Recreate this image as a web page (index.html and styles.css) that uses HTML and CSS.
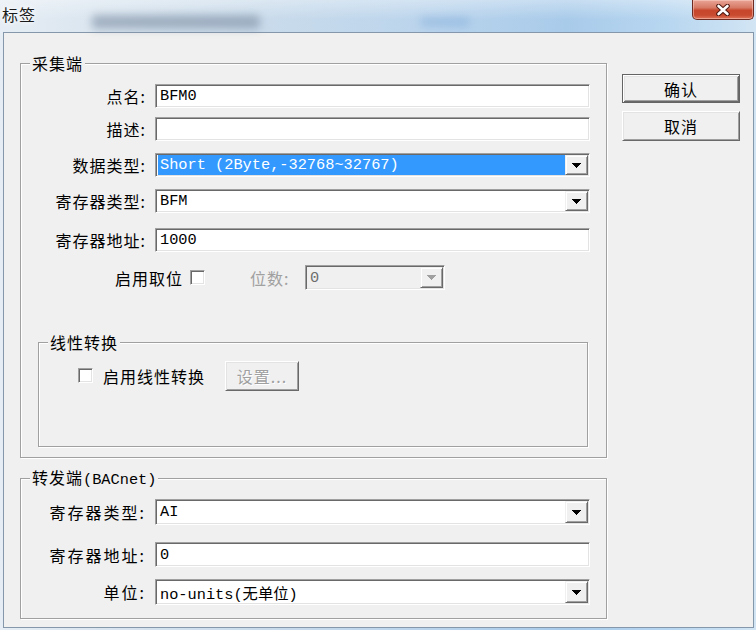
FILE: index.html
```html
<!DOCTYPE html>
<html lang="zh-CN">
<head>
<meta charset="utf-8">
<title>标签</title>
<link rel="stylesheet" href="styles.css">
</head>
<body>
<div class="window">
  <header class="titlebar">
    <span class="title">标签</span>
    <span class="glass-shape glass-shape-a"></span>
    <span class="glass-shape glass-shape-b"></span>
    <button class="close-btn" aria-label="关闭">
      <svg width="16" height="12" viewBox="0 0 16 12"><path d="M3.5 2 L12.5 10 M12.5 2 L3.5 10" stroke="#4e1810" stroke-width="4.6" stroke-linecap="round"/><path d="M3.5 2 L12.5 10 M12.5 2 L3.5 10" stroke="#ffffff" stroke-width="2.6" stroke-linecap="round"/></svg>
    </button>
  </header>
  <div class="client">
    <div class="main-col">
      <fieldset class="group group-collect">
        <legend>采集端</legend>
        <div class="row row-name"><span class="lbl">点名:</span><div class="edit"><span class="val">BFM0</span></div></div>
        <div class="row row-desc"><span class="lbl">描述:</span><div class="edit"><span class="val"></span></div></div>
        <div class="row row-dtype"><span class="lbl">数据类型:</span><div class="combo"><span class="val selected">Short (2Byte,-32768~32767)</span><span class="drop"><svg width="9" height="5" viewBox="0 0 9 5"><path d="M0 0h9v1h-1v1h-1v1h-1v1h-1v1h-1v-1h-1v-1h-1v-1h-1v-1h-1z" fill="#000"/></svg></span></div></div>
        <div class="row row-rtype"><span class="lbl">寄存器类型:</span><div class="combo"><span class="val">BFM</span><span class="drop"><svg width="9" height="5" viewBox="0 0 9 5"><path d="M0 0h9v1h-1v1h-1v1h-1v1h-1v1h-1v-1h-1v-1h-1v-1h-1v-1h-1z" fill="#000"/></svg></span></div></div>
        <div class="row row-raddr"><span class="lbl">寄存器地址:</span><div class="edit"><span class="val">1000</span></div></div>
        <div class="row row-bits">
          <span class="bits-label">启用取位</span>
          <span class="check check-bits"></span>
          <span class="bits-count">位数:</span>
          <div class="combo combo-disabled"><span class="val">0</span><span class="drop"><svg width="9" height="5" viewBox="0 0 9 5"><path d="M0 0h9v1h-1v1h-1v1h-1v1h-1v1h-1v-1h-1v-1h-1v-1h-1v-1h-1z" fill="#a0a0a0"/></svg></span></div>
        </div>
        <fieldset class="group group-linear">
          <legend>线性转换</legend>
          <div class="row row-linear">
            <span class="check check-linear"></span>
            <span class="linear-label">启用线性转换</span>
            <button class="btn btn-setup" disabled>设置...</button>
          </div>
        </fieldset>
      </fieldset>
      <fieldset class="group group-forward">
        <legend>转发端<span class="mono">(BACnet)</span></legend>
        <div class="row row-f1"><span class="lbl lbl-wide">寄存器类型:</span><div class="combo"><span class="val">AI</span><span class="drop"><svg width="9" height="5" viewBox="0 0 9 5"><path d="M0 0h9v1h-1v1h-1v1h-1v1h-1v1h-1v-1h-1v-1h-1v-1h-1v-1h-1z" fill="#000"/></svg></span></div></div>
        <div class="row row-f2"><span class="lbl lbl-wide">寄存器地址:</span><div class="edit"><span class="val">0</span></div></div>
        <div class="row row-f3"><span class="lbl lbl-wide">单位:</span><div class="combo"><span class="val">no-units(无单位)</span><span class="drop"><svg width="9" height="5" viewBox="0 0 9 5"><path d="M0 0h9v1h-1v1h-1v1h-1v1h-1v1h-1v-1h-1v-1h-1v-1h-1v-1h-1z" fill="#000"/></svg></span></div></div>
      </fieldset>
    </div>
    <div class="btn-col">
      <button class="btn btn-default">确认</button>
      <button class="btn btn-cancel">取消</button>
    </div>
  </div>
</div>
</body>
</html>
```

FILE: styles.css
```css
* { box-sizing: border-box; }
html, body { margin: 0; padding: 0; }
body {
  width: 756px;
  height: 630px;
  overflow: hidden;
  font-family: "Noto Sans CJK SC", "Noto Sans", sans-serif;
  font-size: 16px;
  color: #000;
  background: #b9d3ea;
}
.window {
  width: 756px;
  height: 630px;
  display: flex;
  flex-direction: column;
  background: linear-gradient(90deg, #e6edf4 0%, #dbe6f0 12%, #c9dbeb 35%, #bcd5ec 55%, #a9cbea 75%, #b7d6f0 88%, #d2e5f4 100%);
}
.titlebar {
  position: relative;
  height: 32px;
  flex: none;
  display: flex;
  align-items: flex-start;
  background: linear-gradient(180deg, rgba(255,255,255,.35), rgba(255,255,255,0) 60%);
}
.title {
  position: relative;
  z-index: 1;
  margin: 3px 0 0 2px;
  line-height: 22px;
  font-size: 16px;
  letter-spacing: 1px;
  color: #1b1b1b;
  text-shadow: 0 0 8px #fff, 0 0 4px #fff;
}
.glass-shape { position: absolute; border-radius: 4px; filter: blur(4px); }
.glass-shape-a { left: 92px; top: 15px; width: 168px; height: 14px; background: #7d8ea3; opacity: .6; }
.glass-shape-b { left: 420px; top: 17px; width: 50px; height: 10px; background: #6f9fd6; opacity: .35; }
.close-btn {
  position: relative;
  z-index: 1;
  margin: 0 2px 0 auto;
  width: 62px;
  height: 20px;
  padding: 0;
  border: 1px solid #6d2b22;
  border-top: 0;
  border-radius: 0 0 5px 5px;
  background: linear-gradient(180deg, #e9a597 0%, #d77a66 40%, #c7462c 55%, #c84a2f 80%, #e0765c 100%);
  box-shadow: inset 0 0 0 1px rgba(255,220,210,.45);
  display: flex;
  align-items: center;
  justify-content: center;
}
.client {
  flex: 1;
  margin: 0 2px 2px 3px;
  border: 1px solid #8597ab;
  background: #f0f0f0;
  display: flex;
  align-items: flex-start;
}
.main-col {
  padding-left: 16px;
  display: flex;
  flex-direction: column;
}
.group {
  margin: 0;
  padding: 0;
  min-width: 0;
  border: 1px solid #a0a0a0;
  box-shadow: 1px 1px 0 #fff, inset 1px 1px 0 #fff;
}
.group legend {
  margin-left: 9px;
  padding: 0 2px;
  line-height: 20px;
  font-size: 16px;
  letter-spacing: 1px;
  background: #f0f0f0;
}
.mono { font-family: "Liberation Mono", monospace; font-size: 15.3px; letter-spacing: 0; }
.group-collect { width: 587px; margin-top: 20px; padding-bottom: 10px; }
.group-forward { width: 587px; margin-top: 9px; padding-bottom: 13px; }
.group-linear { width: 550px; margin: 42px 0 0 17px; padding: 9px 0 55px 0; }

.row { display: flex; align-items: center; height: 24px; }
.row-name { margin-top: 11px; }
.row-desc { margin-top: 9px; }
.row-dtype { margin-top: 12px; }
.row-rtype { margin-top: 12px; }
.row-raddr { margin-top: 15px; }
.row-bits { margin-top: 13px; height: 25px; }
.row-linear { height: 30px; }
.row-f1 { margin-top: 9px; height: 26px; }
.row-f2 { margin-top: 17px; height: 25px; }
.row-f3 { margin-top: 12px; height: 26px; }

.lbl {
  flex: none;
  width: 125px;
  margin-right: 9px;
  text-align: right;
  letter-spacing: 1px;
  line-height: 20px;
  white-space: nowrap;
}
.lbl-wide { letter-spacing: 2px; }

.edit, .combo {
  flex: none;
  width: 435px;
  height: 100%;
  padding: 1px;
  display: flex;
  align-items: stretch;
  background: #fff;
  border: 1px solid;
  border-color: #a0a0a0 #fff #fff #a0a0a0;
  box-shadow: inset 1px 1px 0 #696969, inset -1px -1px 0 #e3e3e3;
}
.val {
  flex: 1;
  min-width: 0;
  padding-left: 3px;
  display: flex;
  align-items: center;
  font-family: "Liberation Mono", "Noto Sans CJK SC", monospace;
  font-size: 15.3px;
  white-space: nowrap;
  overflow: hidden;
}
.val.selected {
  margin-left: 1px;
  padding-left: 2px;
  background: #3399ff;
  color: #fff;
}
.drop {
  flex: none;
  width: 23px;
  display: flex;
  align-items: center;
  justify-content: center;
  background: #f0f0f0;
  border: 1px solid;
  border-color: #f0f0f0 #696969 #696969 #f0f0f0;
  box-shadow: inset 1px 1px 0 #fff, inset -1px -1px 0 #a0a0a0;
}

.bits-label { margin-left: 94px; letter-spacing: 1px; line-height: 20px; }
.check {
  flex: none;
  width: 15px;
  height: 15px;
  background: #fff;
  border: 1px solid;
  border-color: #a0a0a0 #fff #fff #a0a0a0;
  box-shadow: inset 1px 1px 0 #696969, inset -1px -1px 0 #e3e3e3;
}
.check-bits { margin-left: 7px; }
.bits-count {
  width: 43px;
  margin: 0 12px 0 45px;
  color: #a0a0a0;
  letter-spacing: 1px;
  line-height: 20px;
}
.combo-disabled { width: 140px; background: #f0f0f0; }
.combo-disabled .val { color: #6d6d6d; }

.check-linear { margin-left: 39px; margin-top: -2px; }
.linear-label { margin-left: 10px; letter-spacing: 1px; line-height: 20px; }

.btn {
  width: 118px;
  height: 29px;
  padding: 0;
  font-family: inherit;
  font-size: 16px;
  letter-spacing: 1px;
  color: #000;
  background: #f0f0f0;
  border: 1px solid;
  border-color: #fff #696969 #696969 #fff;
  box-shadow: inset 1px 1px 0 #e3e3e3, inset -1px -1px 0 #a0a0a0;
}
.btn-default {
  border-color: #646464;
  box-shadow: inset 1px 1px 0 #fff, inset -1px -1px 0 #696969, inset 2px 2px 0 #e3e3e3, inset -2px -2px 0 #a0a0a0;
}
.btn-cancel { height: 30px; }
.btn-setup {
  width: 74px;
  height: 30px;
  margin-left: 20px;
  color: #a0a0a0;
  text-shadow: 1px 1px 0 #fff;
}
.btn-col {
  margin-left: 15px;
  padding-top: 41px;
  display: flex;
  flex-direction: column;
  gap: 8px;
}
```
